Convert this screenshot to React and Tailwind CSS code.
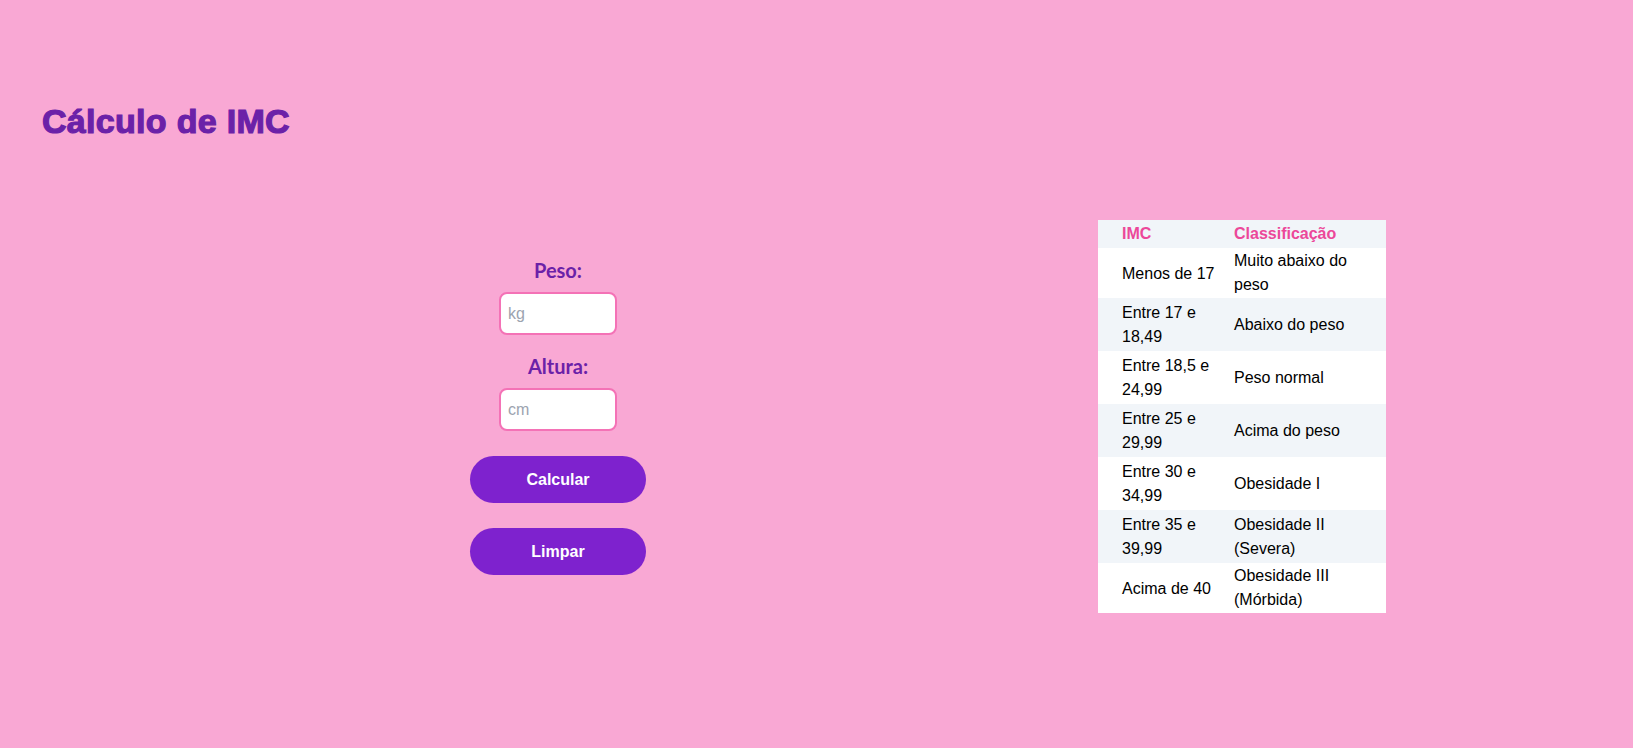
const rows = [
  { imc: "Menos de 17", cls: "Muito abaixo do peso" },
  { imc: "Entre 17 e 18,49", cls: "Abaixo do peso" },
  { imc: "Entre 18,5 e 24,99", cls: "Peso normal" },
  { imc: "Entre 25 e 29,99", cls: "Acima do peso" },
  { imc: "Entre 30 e 34,99", cls: "Obesidade I" },
  { imc: "Entre 35 e 39,99", cls: "Obesidade II (Severa)" },
  { imc: "Acima de 40", cls: "Obesidade III (Mórbida)" },
];

const App = () => {
  return (
    <div className="min-h-screen bg-[#f9a8d4] font-['Liberation_Sans',Arial,sans-serif]">
      <h1 className="pl-[42px] pt-[102px] text-[34px] leading-[39px] font-black tracking-[0.3px] text-[#6b21a8] [-webkit-text-stroke:1.2px_#6b21a8]">
        Cálculo de IMC
      </h1>

      <div className="mt-[79px] flex items-center">
        <div className="ml-[470px] w-[176px] flex flex-col items-center">
          <label className="font-['Lato',sans-serif] text-[20px] leading-6 font-bold text-[#6b21a8]">
            Peso:
          </label>
          <input
            type="text"
            placeholder="kg"
            className="mt-[10px] w-[118px] h-[43px] rounded-lg border-2 border-[#f472b6] bg-white px-[7px] text-[16px] placeholder-[#9ca3af] focus:outline-none"
          />
          <label className="mt-[19px] font-['Lato',sans-serif] text-[20px] leading-6 font-bold text-[#6b21a8]">
            Altura:
          </label>
          <input
            type="text"
            placeholder="cm"
            className="mt-[10px] w-[118px] h-[43px] rounded-lg border-2 border-[#f472b6] bg-white px-[7px] text-[16px] placeholder-[#9ca3af] focus:outline-none"
          />
          <button className="mt-[25px] w-[176px] h-[47px] rounded-full bg-[#7e22ce] text-white text-[16px] font-bold">
            Calcular
          </button>
          <button className="mt-[25px] w-[176px] h-[47px] rounded-full bg-[#7e22ce] text-white text-[16px] font-bold">
            Limpar
          </button>
        </div>

        <table className="ml-[452px] w-[288px] table-fixed border-collapse text-[16px] leading-6 text-black">
          <thead>
            <tr className="bg-[#f1f5f9]">
              <th className="w-[136px] pl-6 py-[2px] text-left font-bold text-[#ec4899]">IMC</th>
              <th className="w-[152px] pr-6 py-[2px] text-left font-bold text-[#ec4899]">Classificação</th>
            </tr>
          </thead>
          <tbody>
            {rows.map((r, i) => (
              <tr key={r.imc} className={i % 2 === 0 ? "bg-white" : "bg-[#f1f5f9]"}>
                <td className="pl-6 pt-[3px] pb-[2px] align-middle">{r.imc}</td>
                <td className="pr-6 py-[1px] align-middle">{r.cls}</td>
              </tr>
            ))}
          </tbody>
        </table>
      </div>
    </div>
  );
};

export default App;
